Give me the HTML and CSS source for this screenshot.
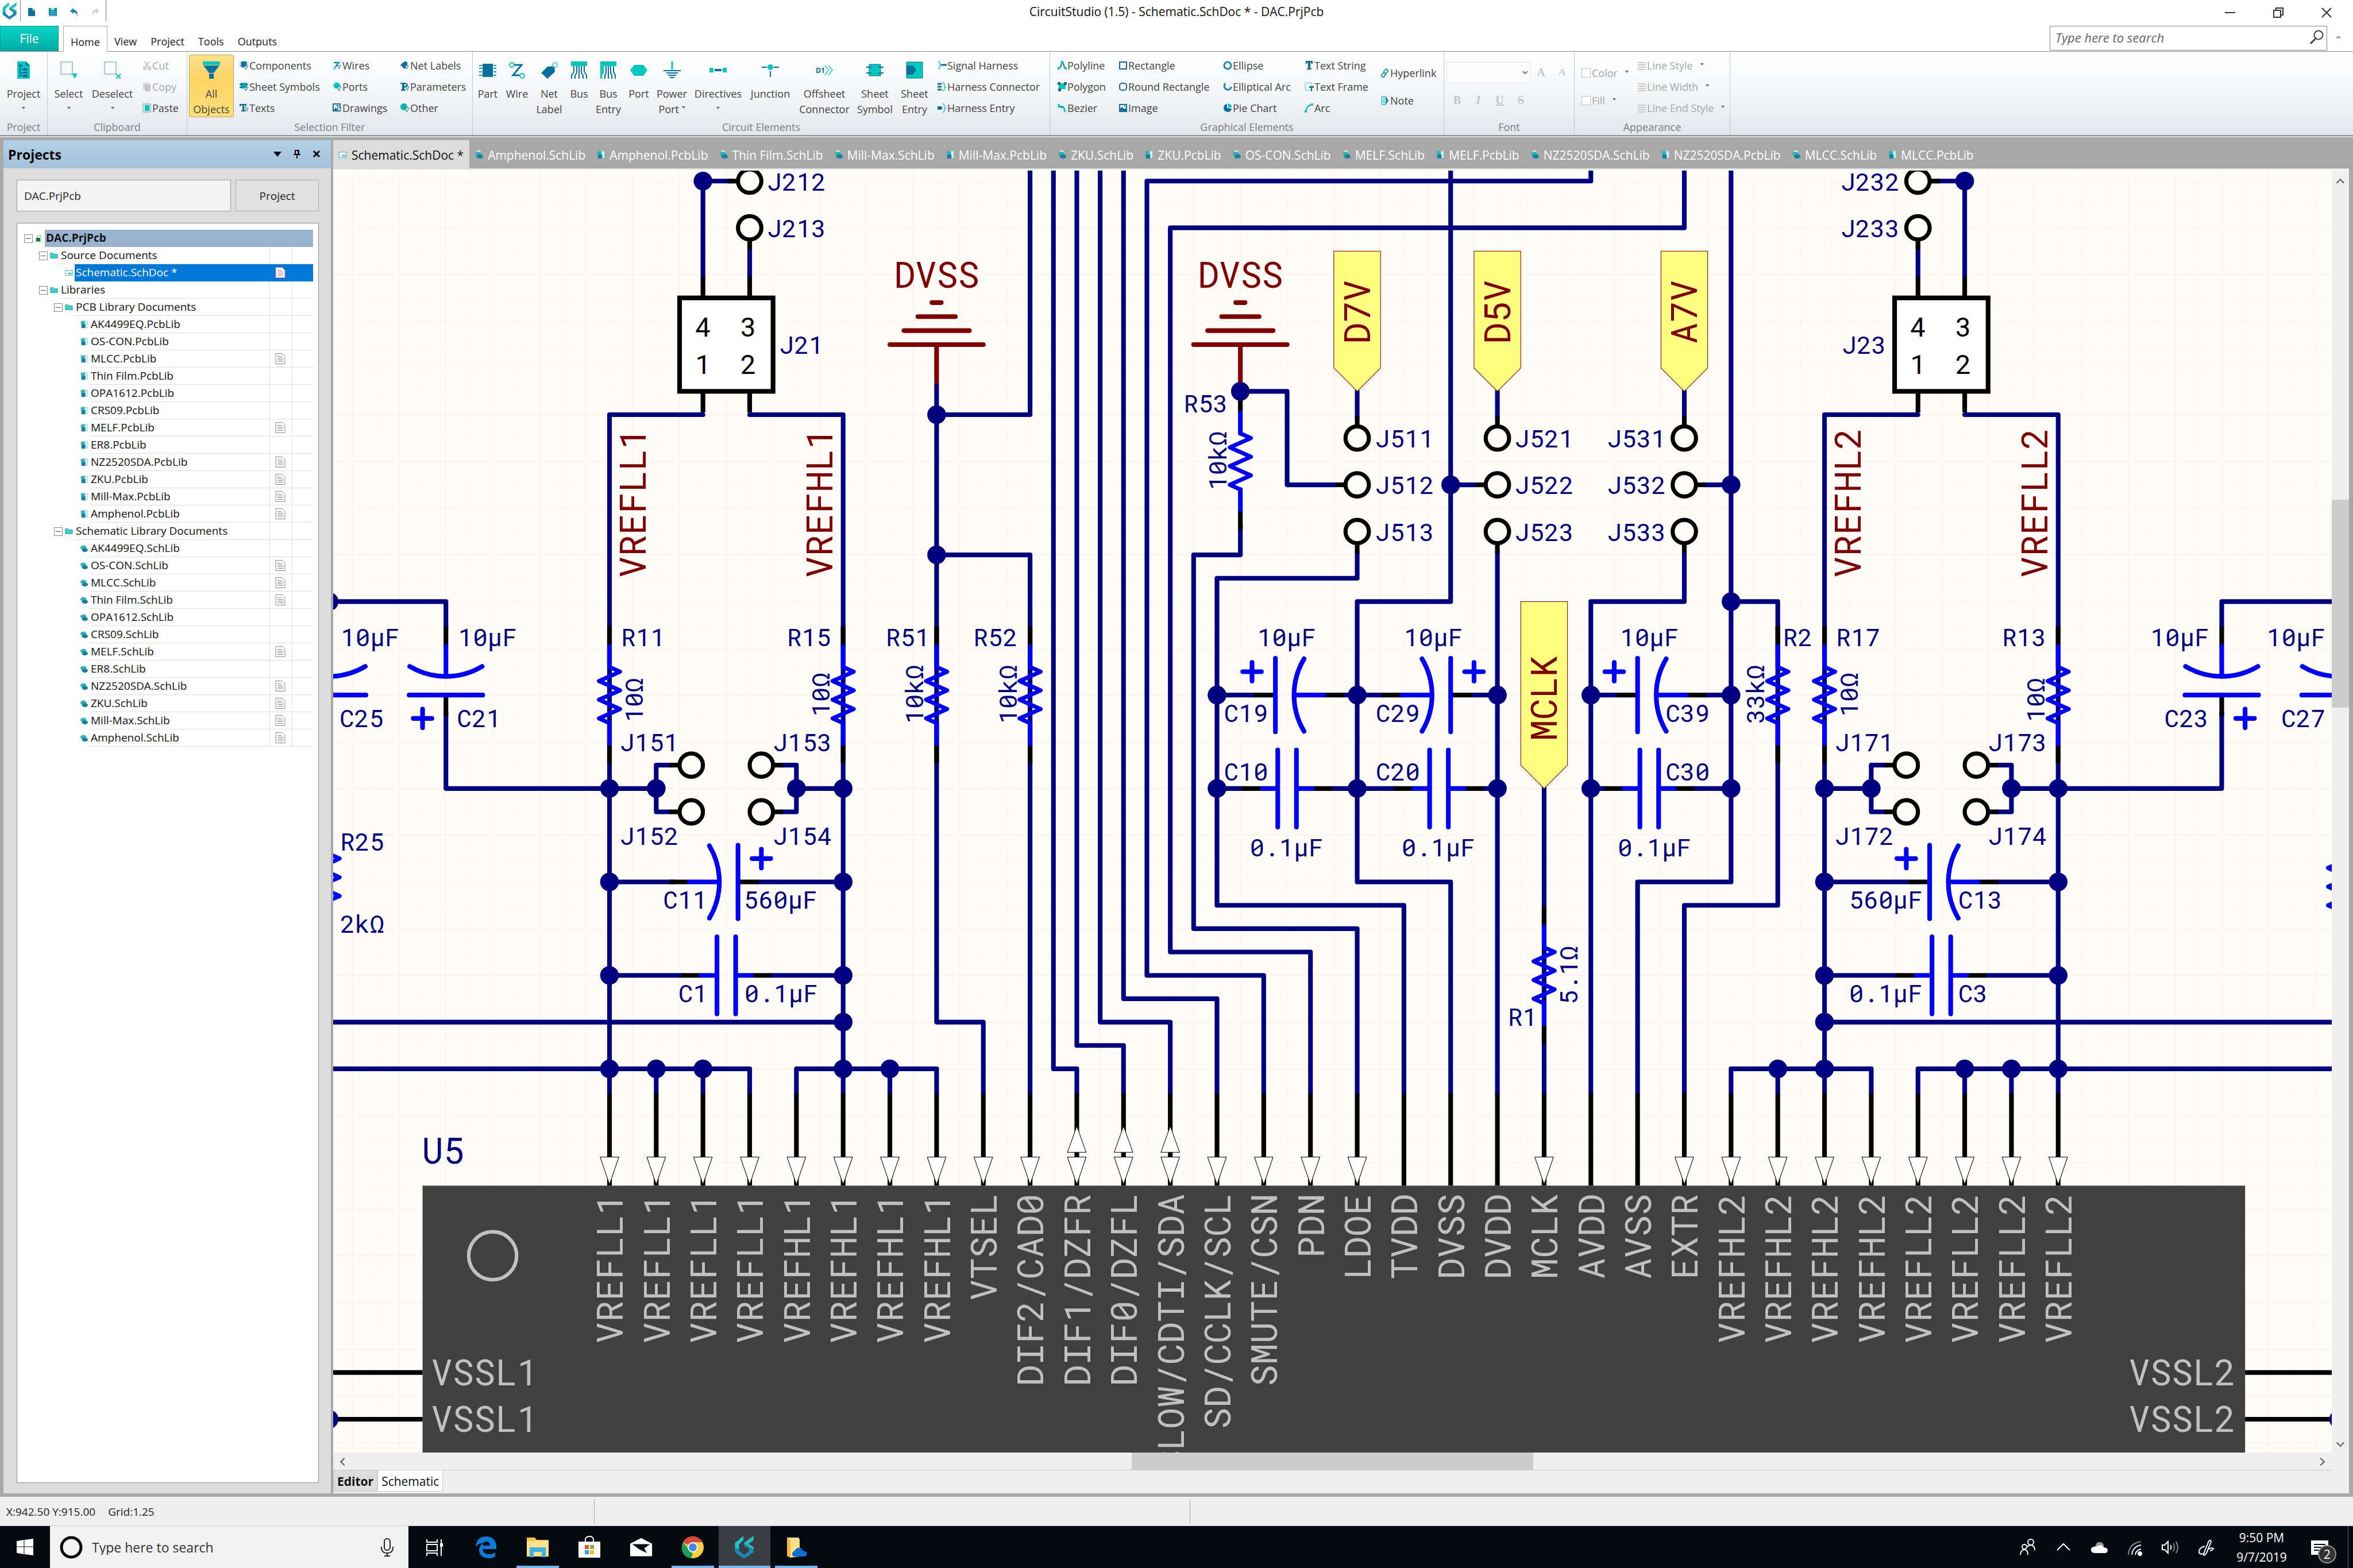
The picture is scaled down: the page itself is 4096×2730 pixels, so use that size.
FILE: index.html
```html
<!DOCTYPE html>
<html lang="en">
<head>
    <meta charset="UTF-8">
    <meta name="viewport" content="width=device-width, initial-scale=1.0">
    <title>CircuitStudio (1.5) - Schematic.SchDoc * - DAC.PrjPcb</title>
    <link rel="stylesheet" href="styles.css">
</head>
<body>
    <!-- icon sprite -->
    <svg class="sprite" aria-hidden="true">
        <symbol id="i-logo" viewBox="0 0 40 46">
            <path fill="#25c0c2" d="M1 14 18 0V9L9 17V26H1ZM38 0V9L28 16 38 22V29L19 18V14Z"/>
            <path fill="#1b87b2" d="M1 26H9V30L19 38 29 31V26L19 20 V15L38 27V33L19 46 1 33Z"/>
        </symbol>
        <symbol id="i-new" viewBox="0 0 16 16"><path fill="#0a6f9f" d="M2 1H9L14 6V15H2Z"/><path fill="#1ec3bd" d="M9 1 14 6H9Z"/></symbol>
        <symbol id="i-save" viewBox="0 0 16 16"><path fill="#0a7fa8" d="M1 1H15V15H3L1 13Z"/><path fill="#7fe3dc" d="M4 1H11V5H4ZM3 7H13V8H3ZM3 10H13V11H3ZM3 13H13V14H3Z"/></symbol>
        <symbol id="i-undo" viewBox="0 0 16 16"><path fill="#0a7fa8" d="M1 6 7 1V4Q14 4 14 15 11 8 7 8V11Z"/></symbol>
        <symbol id="i-redo" viewBox="0 0 16 16"><path fill="#d2d2d2" d="M15 6 9 1V4Q2 4 2 15 5 8 9 8V11Z"/></symbol>
        <symbol id="i-find" viewBox="0 0 26 26"><g fill="none" stroke="#444"><circle cx="16" cy="9" r="7.500" stroke-width="2"/><path stroke-width="3" d="M11 15 2 24"/></g></symbol>

        <symbol id="i-project" viewBox="0 0 30 30"><path fill="#00c8be" d="M4 0H19L26 7V30H4Z"/><path fill="#0a6f9f" d="M19 0 26 7H19Z"/><path fill="none" stroke="#0a6f9f" stroke-width="2" d="M9 7V25H15M9 14H15M9 20H15"/><path fill="#0a6f9f" d="M7 5H13V9H7ZM15 12H22V16H15ZM15 18H22V21H15ZM15 23H22V27H15Z"/></symbol>
        <symbol id="i-select" viewBox="0 0 30 30"><path fill="none" stroke="#0a6f9f" stroke-dasharray="2 1" d="M1 1H21V22H1Z"/><path fill="#00c8be" d="M20 21H30L25 30Z"/></symbol>
        <symbol id="i-deselect" viewBox="0 0 30 30"><path fill="none" stroke="#0a6f9f" stroke-dasharray="2 1" d="M1 1H21V22H1Z"/><path stroke="#00c8be" stroke-width="2" d="M21 22 29 30M29 22 21 30"/></symbol>
        <symbol id="i-filter" viewBox="0 0 30 30"><path fill="#00c8be" d="M0 0H30V6H0Z"/><path fill="#0a6f9f" d="M1 7H29L19 20H11ZM11 21H19V30H11Z"/></symbol>
        <symbol id="i-part" viewBox="0 0 30 30"><path fill="#0a6f9f" d="M6 4H24V27H6Z"/><path stroke="#00a8b0" stroke-width="2" d="M0 7H5M0 12H5M0 18H5M0 24H5M25 7H30M25 12H30M25 18H30M25 24H30"/></symbol>
        <symbol id="i-wire" viewBox="0 0 30 30"><path fill="none" stroke="#0a6f9f" stroke-width="3" d="M10 6H23L8 24H20"/><g fill="none" stroke="#00c8be" stroke-width="2"><circle cx="6" cy="6" r="4"/><circle cx="24" cy="25" r="4"/></g></symbol>
        <symbol id="i-label" viewBox="0 0 30 30"><path fill="#0a6f9f" d="M12 9 24 8 25 18 12 30 1 20Z"/><circle cx="25" cy="6" r="4" fill="none" stroke="#4fd0cd" stroke-width="2"/></symbol>
        <symbol id="i-bus" viewBox="0 0 30 30"><path fill="#00c8be" d="M1 0H29V8H1Z"/><path fill="none" stroke="#0a6f9f" stroke-width="2" d="M6 8V18L2 24V30M11 8V20L8 24V30M15 8V30M19 8V20L22 24V30M24 8V18L28 24V30"/></symbol>
        <symbol id="i-busentry" viewBox="0 0 30 30"><path fill="#00c8be" d="M1 0H29V8H1ZM1 8H7V20L4 24V30H1Z"/><path fill="none" stroke="#0a6f9f" stroke-width="2" d="M11 8V20L9 24V30M15 8V30M19 8V20L21 24V30M24 8V18L27 24V30"/></symbol>
        <symbol id="i-port" viewBox="0 0 30 30"><path fill="#00c8be" d="M7 6H23L30 15 23 25H7L0 15Z"/></symbol>
        <symbol id="i-power" viewBox="0 0 30 30"><path stroke="#00c8be" stroke-width="3" d="M15 0V14"/><path stroke="#0a6f9f" stroke-width="2" d="M0 16H30M5 20H25M8 24H22M11 28H19"/></symbol>
        <symbol id="i-directive" viewBox="0 0 30 30"><path fill="#00c8be" d="M0 11H7V19H0ZM23 11H30V19H23Z"/><path fill="#0a6f9f" d="M9 13H21V17H9Z"/></symbol>
        <symbol id="i-junction" viewBox="0 0 30 30"><path stroke="#0a6f9f" stroke-width="2" d="M0 10H9M21 10H30M15 17V27"/><circle cx="15" cy="10" r="5" fill="#00c8be"/></symbol>
        <symbol id="i-offsheet" viewBox="0 0 30 30"><text x="0" y="20" font-size="12" font-weight="700" fill="#0a6f9f">D1</text><path fill="none" stroke="#4fd0cd" stroke-width="2" d="M16 7 22 15 16 24M22 7 29 15 22 24"/></symbol>
        <symbol id="i-sheetsym" viewBox="0 0 30 30"><path fill="#00c8be" stroke="#0a6f9f" d="M5 5H25V25H5Z"/><path fill="#0a6f9f" d="M0 9H9V11H0ZM0 19H9V21H0ZM21 9H30V11H21ZM21 19H30V21H21Z"/></symbol>
        <symbol id="i-sheetentry" viewBox="0 0 30 30"><path fill="#00c8be" stroke="#0a6f9f" d="M1 1H29V29H1Z"/><path fill="#0a6f9f" d="M1 7H12L18 15 12 23H1Z"/></symbol>

        <symbol id="s-cut" viewBox="0 0 16 16"><g fill="none" stroke="#c4c4c4" stroke-width="2"><path d="M4 1 11 11M12 1 5 11"/><circle cx="4" cy="13" r="2"/><circle cx="12" cy="13" r="2"/></g></symbol>
        <symbol id="s-copy" viewBox="0 0 16 16"><path fill="#dadada" d="M1 1H11V13H1Z"/><path fill="#c4c4c4" d="M4 4H14V16H4Z"/></symbol>
        <symbol id="s-paste" viewBox="0 0 16 16"><path fill="none" stroke="#0a6f9f" stroke-dasharray="2 1" d="M1 1H14V15H1Z"/><path fill="#00c8be" d="M4 3H12V13H4Z"/></symbol>
        <symbol id="s-comp" viewBox="0 0 16 16"><path fill="#0a6f9f" d="M3 1H12V11H3Z"/><path stroke="#00a8b0" d="M0 3H3M0 6H3M0 9H3M12 3H15M12 6H15"/><path fill="#e8f8f8" stroke="#0a6f9f" d="M8 9H15L11 15Z"/></symbol>
        <symbol id="s-sheet" viewBox="0 0 16 16"><path fill="#00a8b0" d="M2 1H13V11H2Z"/><path stroke="#0a6f9f" stroke-width="2" d="M0 4H5M0 9H5M11 4H15"/><path fill="#e8f8f8" stroke="#0a6f9f" d="M8 9H15L11 15Z"/></symbol>
        <symbol id="s-text" viewBox="0 0 16 16"><path fill="#0a6f9f" d="M0 1H12V5H10L9 3H8V12H10V14H3V12H5V3H3L2 5H0Z"/><path fill="#e8f8f8" stroke="#0a6f9f" d="M9 8H15L12 14Z"/></symbol>
        <symbol id="s-wire" viewBox="0 0 16 16"><path fill="none" stroke="#0a6f9f" stroke-width="2" d="M2 3H10L4 12"/><circle cx="11" cy="3" r="2" fill="none" stroke="#00c8be"/><circle cx="3" cy="13" r="2" fill="none" stroke="#00c8be"/><path fill="#e8f8f8" stroke="#0a6f9f" d="M8 8H14L11 14Z"/></symbol>
        <symbol id="s-port" viewBox="0 0 16 16"><path fill="#00c8be" d="M4 1H10L14 6 10 11H4L1 6Z"/><path fill="#e8f8f8" stroke="#0a6f9f" d="M8 8H15L11 15Z"/></symbol>
        <symbol id="s-draw" viewBox="0 0 16 16"><path fill="#fff" stroke="#0a6f9f" stroke-width="2" d="M1 1H13V13H1Z"/><path fill="#0a6f9f" d="M2 12 5 7 8 10V12ZM7 3H10V6H7Z"/><path fill="#e8f8f8" stroke="#0a6f9f" d="M8 8H15L11 15Z"/></symbol>
        <symbol id="s-label" viewBox="0 0 16 16"><path fill="#0a6f9f" d="M0 7 7 1 12 2V9L7 14Z"/><path fill="#e8f8f8" stroke="#0a6f9f" d="M8 8H14L11 14Z"/></symbol>
        <symbol id="s-param" viewBox="0 0 16 16"><path fill="#0a6f9f" fill-rule="evenodd" d="M0 1H8Q13 2 13 5 12 9 7 9V13H9V15H1V13H3V3H0ZM7 3V7Q10 7 10 5 10 3 7 3Z"/><path fill="#e8f8f8" stroke="#0a6f9f" d="M9 8H15L12 14Z"/></symbol>
        <symbol id="s-other" viewBox="0 0 16 16"><circle cx="6" cy="6" r="6" fill="#00b8b0"/><path fill="#e8f8f8" stroke="#0a6f9f" d="M8 8H15L11 15Z"/></symbol>
        <symbol id="s-harness" viewBox="0 0 16 16"><path fill="none" stroke="#4fd0cd" stroke-width="2" d="M1 1Q4 1 4 5T6 7Q4 8 4 11T1 14"/><path stroke="#0a6f9f" stroke-width="3" d="M6 7H16"/></symbol>
        <symbol id="s-harncon" viewBox="0 0 16 16"><path stroke="#0a6f9f" stroke-width="3" d="M0 3H7M0 8H7M0 13H7"/><path fill="none" stroke="#4fd0cd" stroke-width="2" d="M8 1Q12 1 12 5T15 8Q12 9 12 12T8 15"/></symbol>
        <symbol id="s-harnent" viewBox="0 0 16 16"><path fill="#0a6f9f" d="M0 5H6L9 8 6 11H0Z"/><path fill="none" stroke="#4fd0cd" stroke-width="2" d="M8 0Q12 1 12 5T15 8Q12 9 12 12T8 16"/></symbol>
        <symbol id="s-polyline" viewBox="0 0 16 16"><path fill="none" stroke="#0a6f9f" stroke-width="2" d="M2 14Q7 10 7 1M9 2 13 14"/><path fill="#00c8be" d="M0 11H4V15H0ZM12 11H16V15H12ZM6 0H10V4H6Z"/></symbol>
        <symbol id="s-polygon" viewBox="0 0 16 16"><path fill="#00c8be" d="M2 2H14V12H8L2 14Z"/><path fill="#0a6f9f" d="M0 0H5V5H0ZM11 0H16V5H11ZM1 11H6V16H1Z"/></symbol>
        <symbol id="s-bezier" viewBox="0 0 16 16"><path fill="none" stroke="#00c8be" stroke-width="3" d="M2 1V6H8Q12 7 13 15"/><path stroke="#0a6f9f" stroke-width="2" d="M5 6H10"/></symbol>
        <symbol id="s-rect" viewBox="0 0 16 16"><path fill="none" stroke="#0a6f9f" stroke-width="2" d="M2 2H14V14H2Z"/></symbol>
        <symbol id="s-rrect" viewBox="0 0 16 16"><rect x="2" y="2" width="12" height="12" rx="4" fill="none" stroke="#0a6f9f" stroke-width="2"/></symbol>
        <symbol id="s-image" viewBox="0 0 16 16"><path fill="#fff" stroke="#0a6f9f" stroke-width="2" d="M2 2H14V14H2Z"/><path fill="#0a6f9f" d="M2 14V10L6 6 10 10 12 8 14 11V14ZM10 4H12V6H10Z"/></symbol>
        <symbol id="s-ellipse" viewBox="0 0 16 16"><circle cx="8" cy="8" r="6" fill="none" stroke="#1f86a8" stroke-width="3"/></symbol>
        <symbol id="s-earc" viewBox="0 0 16 16"><path fill="none" stroke="#1f86a8" stroke-width="3" d="M4 2Q1 5 3 10 6 14 10 13 14 12 14 8"/></symbol>
        <symbol id="s-pie" viewBox="0 0 16 16"><path fill="#0a6f9f" d="M7 1V8L15 9Q14 15 8 15 1 14 1 8 1 2 7 1Z"/><path fill="#00c8be" d="M9 0Q15 1 15 7H9Z"/></symbol>
        <symbol id="s-t" viewBox="0 0 16 16"><path fill="#0a6f9f" d="M2 0H14V5H12L11 3H10V13H12V15H4V13H6V3H5L4 5H2Z"/></symbol>
        <symbol id="s-frame" viewBox="0 0 16 16"><path fill="none" stroke="#00b8b0" stroke-dasharray="2 1" d="M1 1H12V14H1Z"/><path fill="#0a6f9f" d="M8 7H16V10H13V16H11V10H8Z"/></symbol>
        <symbol id="s-arc" viewBox="0 0 16 16"><path fill="none" stroke="#00a8b0" stroke-width="2" d="M2 14Q3 4 13 2"/><path fill="#00c8be" d="M0 12H4V16H0ZM11 0H15V4H11Z"/></symbol>
        <symbol id="s-link" viewBox="0 0 16 16"><g fill="none" stroke="#1f9aa8" stroke-width="2"><rect x="7" y="1" width="5" height="8" rx="2" transform="rotate(35 9 5)"/><rect x="3" y="7" width="5" height="8" rx="2" transform="rotate(35 5 11)"/></g></symbol>
        <symbol id="s-note" viewBox="0 0 16 16"><path fill="#bff0ee" stroke="#00a8b0" d="M2 1H10V15H2Z"/><path fill="#0a6f9f" d="M9 1 14 8 9 15V11L11 8 9 5Z"/><path stroke="#00a8b0" d="M4 5H8M4 8H8M4 11H8"/></symbol>
        <symbol id="s-lines" viewBox="0 0 16 16"><path stroke="#c8c8c8" stroke-width="2" d="M1 3H15M1 7H15M1 11H15M1 15H15"/></symbol>

        <symbol id="t-sch" viewBox="0 0 16 16"><path fill="#e6fbfa" stroke="#3aa9a5" d="M1 3H15V13H1Z"/><path fill="#3ac0ba" d="M7 8H13V11H7Z"/></symbol>
        <symbol id="t-pcblib" viewBox="0 0 16 16"><path fill="#d9f1f3" stroke="#9cc" d="M6 1H15V14H6Z"/><path fill="#2fb5b5" d="M2 1H10V7H2Z"/><path fill="#157fa6" d="M3 7H11V15H3Z"/></symbol>
        <symbol id="t-schlib" viewBox="0 0 16 16"><path fill="#e4f4f4" d="M4 0H10L13 4H4Z"/><ellipse cx="7" cy="6" rx="6" ry="4" fill="#2fb5ad"/><ellipse cx="10" cy="11" rx="6" ry="4" fill="#157fa6"/></symbol>
        <symbol id="t-prj" viewBox="0 0 16 16"><path fill="#dff0df" stroke="#9bb" d="M4 2H12V15H4Z"/><path fill="#157a30" d="M2 7H10V14H2Z"/></symbol>
        <symbol id="t-folder" viewBox="0 0 16 16"><path fill="#3fcfc6" stroke="#1e9f98" d="M1 3H6L8 5H15V13H1Z"/></symbol>
        <symbol id="t-doc" viewBox="0 0 18 20"><path fill="#fff" stroke="currentColor" d="M1 1H12L17 6V19H1Z"/><path stroke="currentColor" d="M4 6H11M4 9H14M4 12H14M4 15H14"/></symbol>
    </svg>

    <header class="titlebar">
        <div class="quick">
            <svg class="logo"><use href="#i-logo"/></svg>
            <i></i>
            <button aria-label="New"><svg><use href="#i-new"/></svg></button>
            <button aria-label="Save"><svg><use href="#i-save"/></svg></button>
            <button aria-label="Undo"><svg><use href="#i-undo"/></svg></button>
            <button aria-label="Redo"><svg><use href="#i-redo"/></svg></button>
            <i></i>
        </div>
        <h1>CircuitStudio (1.5) - Schematic.SchDoc * - DAC.PrjPcb</h1>
        <div class="winbtns">
            <button aria-label="Minimize"><svg viewBox="0 0 20 20"><path d="M1 10H19"/></svg></button>
            <button aria-label="Restore"><svg viewBox="0 0 20 20"><path d="M2 6H14V18H2ZM6 6V2H18V14H14"/></svg></button>
            <button aria-label="Close"><svg viewBox="0 0 20 20"><path d="M2 2 18 18M18 2 2 18"/></svg></button>
        </div>
    </header>

    <nav class="menu">
        <button class="file">File</button>
        <button class="current">Home</button>
        <button>View</button>
        <button>Project</button>
        <button>Tools</button>
        <button>Outputs</button>
        <label class="search">
            <input type="search" placeholder="Type here to search" aria-label="Search">
            <svg><use href="#i-find"/></svg>
        </label>
        <button class="collapse" aria-label="Collapse ribbon">&#8963;</button>
    </nav>

    <section class="ribbon">
        <div class="group g-project">
            <div class="tools">
                <button class="big"><svg><use href="#i-project"/></svg><span>Project</span><b class="down"></b></button>
            </div>
            <h2>Project</h2>
        </div>
        <div class="group g-clip">
            <div class="tools">
                <button class="big"><svg><use href="#i-select"/></svg><span>Select</span><b class="down"></b></button>
                <button class="big"><svg><use href="#i-deselect"/></svg><span>Deselect</span><b class="down"></b></button>
                <div class="col">
                    <button class="small" disabled><svg><use href="#s-cut"/></svg>Cut</button>
                    <button class="small" disabled><svg><use href="#s-copy"/></svg>Copy</button>
                    <button class="small"><svg><use href="#s-paste"/></svg>Paste</button>
                </div>
            </div>
            <h2>Clipboard</h2>
        </div>
        <div class="group g-filter">
            <div class="tools">
                <button class="big on"><svg><use href="#i-filter"/></svg><span>All<br>Objects</span></button>
                <div class="col">
                    <button class="small"><svg><use href="#s-comp"/></svg>Components</button>
                    <button class="small"><svg><use href="#s-sheet"/></svg>Sheet Symbols</button>
                    <button class="small"><svg><use href="#s-text"/></svg>Texts</button>
                </div>
                <div class="col">
                    <button class="small"><svg><use href="#s-wire"/></svg>Wires</button>
                    <button class="small"><svg><use href="#s-port"/></svg>Ports</button>
                    <button class="small"><svg><use href="#s-draw"/></svg>Drawings</button>
                </div>
                <div class="col">
                    <button class="small"><svg><use href="#s-label"/></svg>Net Labels</button>
                    <button class="small"><svg><use href="#s-param"/></svg>Parameters</button>
                    <button class="small"><svg><use href="#s-other"/></svg>Other</button>
                </div>
            </div>
            <h2>Selection Filter</h2>
        </div>
        <div class="group g-circuit">
            <div class="tools">
                <button class="big"><svg><use href="#i-part"/></svg><span>Part</span></button>
                <button class="big"><svg><use href="#i-wire"/></svg><span>Wire</span></button>
                <button class="big"><svg><use href="#i-label"/></svg><span>Net<br>Label</span></button>
                <button class="big"><svg><use href="#i-bus"/></svg><span>Bus</span></button>
                <button class="big"><svg><use href="#i-busentry"/></svg><span>Bus<br>Entry</span></button>
                <button class="big"><svg><use href="#i-port"/></svg><span>Port</span></button>
                <button class="big"><svg><use href="#i-power"/></svg><span>Power<br>Port <b class="down side"></b></span></button>
                <button class="big"><svg><use href="#i-directive"/></svg><span>Directives</span><b class="down"></b></button>
                <button class="big"><svg><use href="#i-junction"/></svg><span>Junction</span></button>
                <button class="big"><svg><use href="#i-offsheet"/></svg><span>Offsheet<br>Connector</span></button>
                <button class="big"><svg><use href="#i-sheetsym"/></svg><span>Sheet<br>Symbol</span></button>
                <button class="big"><svg><use href="#i-sheetentry"/></svg><span>Sheet<br>Entry</span></button>
                <div class="col">
                    <button class="small"><svg><use href="#s-harness"/></svg>Signal Harness</button>
                    <button class="small"><svg><use href="#s-harncon"/></svg>Harness Connector</button>
                    <button class="small"><svg><use href="#s-harnent"/></svg>Harness Entry</button>
                </div>
            </div>
            <h2>Circuit Elements</h2>
        </div>
        <div class="group g-graph">
            <div class="tools">
                <div class="col">
                    <button class="small"><svg><use href="#s-polyline"/></svg>Polyline</button>
                    <button class="small"><svg><use href="#s-polygon"/></svg>Polygon</button>
                    <button class="small"><svg><use href="#s-bezier"/></svg>Bezier</button>
                </div>
                <div class="col">
                    <button class="small"><svg><use href="#s-rect"/></svg>Rectangle</button>
                    <button class="small"><svg><use href="#s-rrect"/></svg>Round Rectangle</button>
                    <button class="small"><svg><use href="#s-image"/></svg>Image</button>
                </div>
                <div class="col">
                    <button class="small"><svg><use href="#s-ellipse"/></svg>Ellipse</button>
                    <button class="small"><svg><use href="#s-earc"/></svg>Elliptical Arc</button>
                    <button class="small"><svg><use href="#s-pie"/></svg>Pie Chart</button>
                </div>
                <div class="col">
                    <button class="small"><svg><use href="#s-t"/></svg>Text String</button>
                    <button class="small"><svg><use href="#s-frame"/></svg>Text Frame</button>
                    <button class="small"><svg><use href="#s-arc"/></svg>Arc</button>
                </div>
                <div class="col two">
                    <button class="small"><svg><use href="#s-link"/></svg>Hyperlink</button>
                    <button class="small"><svg><use href="#s-note"/></svg>Note</button>
                </div>
            </div>
            <h2>Graphical Elements</h2>
        </div>
        <div class="group g-font">
            <div class="tools">
                <div class="fontrow">
                    <select aria-label="Font" disabled><option></option></select>
                    <button disabled>A</button>
                    <button disabled class="shrink">A</button>
                </div>
                <div class="fontrow">
                    <button disabled>B</button>
                    <button disabled><i>I</i></button>
                    <button disabled><u>U</u></button>
                    <button disabled><s>S</s></button>
                </div>
            </div>
            <h2>Font</h2>
        </div>
        <div class="group g-look">
            <div class="tools">
                <div class="col two">
                    <button class="small" disabled><span class="swatch"></span>Color<b class="down"></b></button>
                    <button class="small" disabled><span class="swatch"></span>Fill<b class="down"></b></button>
                </div>
                <div class="col">
                    <button class="small" disabled><svg><use href="#s-lines"/></svg>Line Style<b class="down"></b></button>
                    <button class="small" disabled><svg><use href="#s-lines"/></svg>Line Width<b class="down"></b></button>
                    <button class="small" disabled><svg><use href="#s-lines"/></svg>Line End Style<b class="down"></b></button>
                </div>
            </div>
            <h2>Appearance</h2>
        </div>
    </section>

    <main class="workspace">
        <aside class="panel">
            <header>
                <h2>Projects</h2>
                <button aria-label="Menu"><svg viewBox="0 0 16 16"><path d="M1 4H15L8 13Z"/></svg></button>
                <button aria-label="Pin"><svg viewBox="0 0 16 16"><path d="M4 1H12V8H14V10H9V16H7V10H2V8H4ZM6 3V8H9V3Z" fill-rule="evenodd"/></svg></button>
                <button aria-label="Close"><svg viewBox="0 0 16 16"><path d="M2 4 4 2 8 6 12 2 14 4 10 8 14 12 12 14 8 10 4 14 2 12 6 8Z"/></svg></button>
            </header>
            <div class="pick">
                <input type="text" value="DAC.PrjPcb" aria-label="Active project">
                <button>Project</button>
            </div>
            <ul class="tree">
                <li class="l0 root"><button class="fold" aria-label="Collapse"></button><svg><use href="#t-prj"/></svg><span>DAC.PrjPcb</span><em></em><em></em></li>
                <li class="l1"><button class="fold" aria-label="Collapse"></button><svg><use href="#t-folder"/></svg><span>Source Documents</span><em></em><em></em></li>
                <li class="l2 leaf picked"><svg><use href="#t-sch"/></svg><span>Schematic.SchDoc *</span><em><svg><use href="#t-doc"/></svg></em><em></em></li>
                <li class="l1"><button class="fold" aria-label="Collapse"></button><svg><use href="#t-folder"/></svg><span>Libraries</span><em></em><em></em></li>
                <li class="l2"><button class="fold" aria-label="Collapse"></button><svg><use href="#t-folder"/></svg><span>PCB Library Documents</span><em></em><em></em></li>
                <li class="l3 leaf"><svg><use href="#t-pcblib"/></svg><span>AK4499EQ.PcbLib</span><em></em><em></em></li>
                <li class="l3 leaf"><svg><use href="#t-pcblib"/></svg><span>OS-CON.PcbLib</span><em></em><em></em></li>
                <li class="l3 leaf"><svg><use href="#t-pcblib"/></svg><span>MLCC.PcbLib</span><em><svg><use href="#t-doc"/></svg></em><em></em></li>
                <li class="l3 leaf"><svg><use href="#t-pcblib"/></svg><span>Thin Film.PcbLib</span><em></em><em></em></li>
                <li class="l3 leaf"><svg><use href="#t-pcblib"/></svg><span>OPA1612.PcbLib</span><em></em><em></em></li>
                <li class="l3 leaf"><svg><use href="#t-pcblib"/></svg><span>CRS09.PcbLib</span><em></em><em></em></li>
                <li class="l3 leaf"><svg><use href="#t-pcblib"/></svg><span>MELF.PcbLib</span><em><svg><use href="#t-doc"/></svg></em><em></em></li>
                <li class="l3 leaf"><svg><use href="#t-pcblib"/></svg><span>ER8.PcbLib</span><em></em><em></em></li>
                <li class="l3 leaf"><svg><use href="#t-pcblib"/></svg><span>NZ2520SDA.PcbLib</span><em><svg><use href="#t-doc"/></svg></em><em></em></li>
                <li class="l3 leaf"><svg><use href="#t-pcblib"/></svg><span>ZKU.PcbLib</span><em><svg><use href="#t-doc"/></svg></em><em></em></li>
                <li class="l3 leaf"><svg><use href="#t-pcblib"/></svg><span>Mill-Max.PcbLib</span><em><svg><use href="#t-doc"/></svg></em><em></em></li>
                <li class="l3 leaf"><svg><use href="#t-pcblib"/></svg><span>Amphenol.PcbLib</span><em><svg><use href="#t-doc"/></svg></em><em></em></li>
                <li class="l2"><button class="fold" aria-label="Collapse"></button><svg><use href="#t-folder"/></svg><span>Schematic Library Documents</span><em></em><em></em></li>
                <li class="l3 leaf"><svg><use href="#t-schlib"/></svg><span>AK4499EQ.SchLib</span><em></em><em></em></li>
                <li class="l3 leaf"><svg><use href="#t-schlib"/></svg><span>OS-CON.SchLib</span><em><svg><use href="#t-doc"/></svg></em><em></em></li>
                <li class="l3 leaf"><svg><use href="#t-schlib"/></svg><span>MLCC.SchLib</span><em><svg><use href="#t-doc"/></svg></em><em></em></li>
                <li class="l3 leaf"><svg><use href="#t-schlib"/></svg><span>Thin Film.SchLib</span><em><svg><use href="#t-doc"/></svg></em><em></em></li>
                <li class="l3 leaf"><svg><use href="#t-schlib"/></svg><span>OPA1612.SchLib</span><em></em><em></em></li>
                <li class="l3 leaf"><svg><use href="#t-schlib"/></svg><span>CRS09.SchLib</span><em></em><em></em></li>
                <li class="l3 leaf"><svg><use href="#t-schlib"/></svg><span>MELF.SchLib</span><em><svg><use href="#t-doc"/></svg></em><em></em></li>
                <li class="l3 leaf"><svg><use href="#t-schlib"/></svg><span>ER8.SchLib</span><em></em><em></em></li>
                <li class="l3 leaf"><svg><use href="#t-schlib"/></svg><span>NZ2520SDA.SchLib</span><em><svg><use href="#t-doc"/></svg></em><em></em></li>
                <li class="l3 leaf"><svg><use href="#t-schlib"/></svg><span>ZKU.SchLib</span><em><svg><use href="#t-doc"/></svg></em><em></em></li>
                <li class="l3 leaf"><svg><use href="#t-schlib"/></svg><span>Mill-Max.SchLib</span><em><svg><use href="#t-doc"/></svg></em><em></em></li>
                <li class="l3 leaf"><svg><use href="#t-schlib"/></svg><span>Amphenol.SchLib</span><em><svg><use href="#t-doc"/></svg></em><em></em></li>
            </ul>
        </aside>

        <section class="editor">
            <div class="doctabs">
                <button class="active"><svg><use href="#t-sch"/></svg>Schematic.SchDoc *</button>
                <button><svg><use href="#t-schlib"/></svg>Amphenol.SchLib</button>
                <button><svg><use href="#t-pcblib"/></svg>Amphenol.PcbLib</button>
                <button><svg><use href="#t-schlib"/></svg>Thin Film.SchLib</button>
                <button><svg><use href="#t-schlib"/></svg>Mill-Max.SchLib</button>
                <button><svg><use href="#t-pcblib"/></svg>Mill-Max.PcbLib</button>
                <button><svg><use href="#t-schlib"/></svg>ZKU.SchLib</button>
                <button><svg><use href="#t-pcblib"/></svg>ZKU.PcbLib</button>
                <button><svg><use href="#t-schlib"/></svg>OS-CON.SchLib</button>
                <button><svg><use href="#t-schlib"/></svg>MELF.SchLib</button>
                <button><svg><use href="#t-pcblib"/></svg>MELF.PcbLib</button>
                <button><svg><use href="#t-schlib"/></svg>NZ2520SDA.SchLib</button>
                <button><svg><use href="#t-pcblib"/></svg>NZ2520SDA.PcbLib</button>
                <button><svg><use href="#t-schlib"/></svg>MLCC.SchLib</button>
                <button><svg><use href="#t-pcblib"/></svg>MLCC.PcbLib</button>
            </div>

            <div class="sheet">
                <!-- grid pitch is 40 units, pins sit every 80 -->
                <svg class="schematic" viewBox="7 22 3422 2195" preserveAspectRatio="xMinYMin slice">
                    <defs>
                        <pattern id="grid" width="80" height="80" patternUnits="userSpaceOnUse">
                            <path class="minor" d="M0 0V80M0 0H80"/>
                            <path class="major" d="M40 0V80M0 40H80"/>
                        </pattern>
                        <g id="res">
                            <path class="lead" d="M0 -118V-83M0 83V117"/>
                            <path class="part" d="M0 -83V-48M0 48V83"/>
                            <path class="part zig" d="M0 -48L18 -40 -18 -24 18 -8 -18 8 18 24 -18 40 0 48"/>
                        </g>
                        <g id="cap">
                            <path class="lead" d="M-77 0H-43M43 0H77"/>
                            <path class="part" d="M-43 0H-16M16 0H43M-16 -66V66M16 -66V66"/>
                        </g>
                        <g id="ecap">
                            <path class="lead" d="M-56 0H-20M63 0H97"/>
                            <path class="part" d="M-20 -63V63M12 0H63M29 -62A121 121 0 0 0 29 62M-76 -40H-44M-60 -56V-24"/>
                        </g>
                        <g id="pad">
                            <path class="lead" d="M0 -20V-37"/>
                            <circle class="ring" r="20"/>
                        </g>
                        <g id="gnd">
                            <path class="power" d="M-80 0H80M-56 -24H56M-32 -48H32M-8 -72H8M0 0V64"/>
                        </g>
                        <g id="hdr">
                            <path class="lead" d="M-40 -116V-80M40 -116V-80M-40 80V116M40 80V116"/>
                            <rect class="box" x="-80" y="-80" width="160" height="160"/>
                            <text class="num" x="-40" y="-14">4</text>
                            <text class="num" x="38" y="-14">3</text>
                            <text class="num" x="-40" y="50">1</text>
                            <text class="num" x="38" y="50">2</text>
                        </g>
                        <path id="pin" class="lead" d="M0 -158V0"/>
                        <g id="pin-in">
                            <use href="#pin"/>
                            <path class="arrow" d="M-16 -49H16L0 -2Z"/>
                        </g>
                        <g id="pin-io">
                            <use href="#pin-in"/>
                            <path class="arrow" d="M-16 -57H16L0 -102Z"/>
                        </g>
                        <path id="port" class="port" d="M-40 -240H40V-40L0 0 -40 -40Z"/>
                    </defs>

                    <rect x="0" y="0" width="3600" height="2400" fill="url(#grid)"/>

                    <!-- wires -->
                    <g class="wire">
                        <path d="M640 204V40H690M720 150V204"/>
                        <path d="M640 440H480V1602M720 440H880V1602"/>
                        <path d="M0 760H200V804M200 950V1080H560M584 1040H560V1120H584M776 1040H800V1120H776M800 1080H880"/>
                        <path d="M480 1240H590M735 1240H880M480 1400H604M756 1400H880"/>
                        <path d="M0 1480H880M0 1560H720V1602M560 1560V1602M640 1560V1602M800 1602V1560H1040V1602M960 1560V1602"/>
                        <path d="M1040 388V1480H1120V1602M1040 440H1200V0M1040 680H1200V1602"/>
                        <path d="M1240 0V1560H1280V1602"/>
                        <path d="M1280 0V1520H1360V1602"/>
                        <path d="M1320 0V1480H1440V1602"/>
                        <path d="M1360 0V1440H1520V1602"/>
                        <path d="M2160 0V40H1400V1400H1600V1602"/>
                        <path d="M2320 0V120H1440V1360H1680V1602"/>
                        <path d="M1560 630V680H1480V1320H1760V1602"/>
                        <path d="M1760 675V720H1520V1280H1840V1602"/>
                        <path d="M1920 0V760H1760V1240H1920V1602M1920 560H1965"/>
                        <path d="M1560 400H1640V560H1724M1760 400V444M2000 400V444M2320 400V444"/>
                        <path d="M2000 675V1602M2080 1080V1602M2320 675V760H2160V1602"/>
                        <path d="M2400 0V1240H2240V1602M2356 560H2400M2400 760H2480V1280H2320V1602"/>
                        <path d="M1520 920H1584M1736 920H1804M1956 920H2000M2160 920H2204M2356 920H2400"/>
                        <path d="M1520 1080H1564M1716 1080H1824M1976 1080H2000M2160 1080H2184M2336 1080H2400"/>
                        <path d="M2720 150V204M2750 40H2800V204M2720 440H2560V1602M2800 440H2960V1602"/>
                        <path d="M2664 1040H2640V1120H2664M2560 1080H2640M2856 1040H2880V1120H2856M2880 1080H3240V950M3240 804V760H3440"/>
                        <path d="M2560 1240H2704M2856 1240H2960M2560 1400H2684M2836 1400H2960M2560 1480H3440"/>
                        <path d="M2400 1602V1560H2640V1602M2480 1560V1602M2720 1602V1560H3440M2800 1560V1602M2880 1560V1602"/>
                    </g>

                    <!-- parts -->
                    <use href="#hdr" x="680" y="320"/>
                    <use href="#hdr" x="2760" y="320"/>
                    <use href="#gnd" x="1040" y="320"/>
                    <use href="#gnd" x="1560" y="320"/>
                    <use href="#res" x="0" y="1240"/>
                    <use href="#res" x="480" y="920"/>
                    <use href="#res" x="880" y="920"/>
                    <use href="#res" x="1040" y="920"/>
                    <use href="#res" x="1200" y="920"/>
                    <use href="#res" x="1560" y="520"/>
                    <use href="#res" x="2080" y="1400"/>
                    <use href="#res" x="2480" y="920"/>
                    <use href="#res" x="2560" y="920"/>
                    <use href="#res" x="2960" y="920"/>
                    <use href="#res" x="3440" y="1240"/>
                    <use href="#cap" x="680" y="1400"/>
                    <use href="#cap" x="1640" y="1080"/>
                    <use href="#cap" x="1900" y="1080"/>
                    <use href="#cap" x="2260" y="1080"/>
                    <use href="#cap" x="2760" y="1400"/>
                    <use href="#ecap" x="1640" y="920"/>
                    <use href="#ecap" transform="translate(1900 920) scale(-1 1)"/>
                    <use href="#ecap" x="2260" y="920"/>
                    <use href="#ecap" transform="translate(680 1240) scale(-1 1)"/>
                    <use href="#ecap" x="2760" y="1240"/>
                    <use href="#ecap" transform="translate(0 900) rotate(-90)"/>
                    <use href="#ecap" transform="translate(200 900) rotate(-90)"/>
                    <use href="#ecap" transform="translate(3240 900) scale(-1 1) rotate(-90)"/>
                    <use href="#ecap" transform="translate(3440 900) scale(-1 1) rotate(-90)"/>
                    <use href="#pad" transform="translate(720 40) rotate(-90)"/>
                    <use href="#pad" transform="translate(720 120) rotate(180)"/>
                    <use href="#pad" transform="translate(2720 40) rotate(90)"/>
                    <use href="#pad" transform="translate(2720 120) rotate(180)"/>
                    <use href="#pad" transform="translate(620 1040) rotate(-90)"/>
                    <use href="#pad" transform="translate(620 1120) rotate(-90)"/>
                    <use href="#pad" transform="translate(740 1040) rotate(90)"/>
                    <use href="#pad" transform="translate(740 1120) rotate(90)"/>
                    <use href="#pad" transform="translate(2700 1040) rotate(-90)"/>
                    <use href="#pad" transform="translate(2700 1120) rotate(-90)"/>
                    <use href="#pad" transform="translate(2820 1040) rotate(90)"/>
                    <use href="#pad" transform="translate(2820 1120) rotate(90)"/>
                    <use href="#pad" x="1760" y="480"/>
                    <use href="#pad" x="2000" y="480"/>
                    <use href="#pad" x="2320" y="480"/>
                    <use href="#pad" transform="translate(1760 560) rotate(-90)"/>
                    <use href="#pad" transform="translate(2000 560) rotate(-90)"/>
                    <use href="#pad" transform="translate(2320 560) rotate(90)"/>
                    <use href="#pad" transform="translate(1760 640) rotate(180)"/>
                    <use href="#pad" transform="translate(2000 640) rotate(180)"/>
                    <use href="#pad" transform="translate(2320 640) rotate(180)"/>
                    <use href="#port" x="1760" y="400"/>
                    <use href="#port" x="2000" y="400"/>
                    <use href="#port" x="2320" y="400"/>
                    <path class="port" d="M2040 760H2120V1040L2080 1080 2040 1040Z"/>

                    <!-- junctions -->
                    <g class="dot">
                        <circle cx="640" cy="40" r="16"/><circle cx="2800" cy="40" r="16"/>
                        <circle cx="1560" cy="400" r="16"/><circle cx="1040" cy="440" r="16"/><circle cx="1040" cy="680" r="16"/>
                        <circle cx="1920" cy="560" r="16"/><circle cx="2400" cy="560" r="16"/>
                        <circle cx="0" cy="760" r="16"/><circle cx="2400" cy="760" r="16"/>
                        <circle cx="1520" cy="920" r="16"/><circle cx="1760" cy="920" r="16"/><circle cx="2000" cy="920" r="16"/>
                        <circle cx="2160" cy="920" r="16"/><circle cx="2400" cy="920" r="16"/>
                        <circle cx="480" cy="1080" r="16"/><circle cx="560" cy="1080" r="16"/><circle cx="800" cy="1080" r="16"/><circle cx="880" cy="1080" r="16"/>
                        <circle cx="1520" cy="1080" r="16"/><circle cx="1760" cy="1080" r="16"/><circle cx="2000" cy="1080" r="16"/>
                        <circle cx="2160" cy="1080" r="16"/><circle cx="2400" cy="1080" r="16"/>
                        <circle cx="2560" cy="1080" r="16"/><circle cx="2640" cy="1080" r="16"/><circle cx="2880" cy="1080" r="16"/><circle cx="2960" cy="1080" r="16"/>
                        <circle cx="480" cy="1240" r="16"/><circle cx="880" cy="1240" r="16"/><circle cx="2560" cy="1240" r="16"/><circle cx="2960" cy="1240" r="16"/>
                        <circle cx="480" cy="1400" r="16"/><circle cx="880" cy="1400" r="16"/><circle cx="2560" cy="1400" r="16"/><circle cx="2960" cy="1400" r="16"/>
                        <circle cx="880" cy="1480" r="16"/><circle cx="2560" cy="1480" r="16"/>
                        <circle cx="480" cy="1560" r="16"/><circle cx="560" cy="1560" r="16"/><circle cx="640" cy="1560" r="16"/>
                        <circle cx="880" cy="1560" r="16"/><circle cx="960" cy="1560" r="16"/>
                        <circle cx="2480" cy="1560" r="16"/><circle cx="2560" cy="1560" r="16"/>
                        <circle cx="2800" cy="1560" r="16"/><circle cx="2880" cy="1560" r="16"/><circle cx="2960" cy="1560" r="16"/>
                    </g>

                    <!-- U5 -->
                    <rect class="chip" x="160" y="1760" width="3120" height="520"/>
                    <circle class="mark" cx="280" cy="1880" r="41"/>
                    <path class="lead" d="M0 2080H160M0 2160H160M3280 2080H3450M3280 2160H3450"/>
                    <g class="dot"><circle cx="0" cy="2160" r="16"/><circle cx="3440" cy="2160" r="16"/></g>
                    <use href="#pin-in" x="480" y="1760"/>
                    <use href="#pin-in" x="560" y="1760"/>
                    <use href="#pin-in" x="640" y="1760"/>
                    <use href="#pin-in" x="720" y="1760"/>
                    <use href="#pin-in" x="800" y="1760"/>
                    <use href="#pin-in" x="880" y="1760"/>
                    <use href="#pin-in" x="960" y="1760"/>
                    <use href="#pin-in" x="1040" y="1760"/>
                    <use href="#pin-in" x="1120" y="1760"/>
                    <use href="#pin-in" x="1200" y="1760"/>
                    <use href="#pin-io" x="1280" y="1760"/>
                    <use href="#pin-io" x="1360" y="1760"/>
                    <use href="#pin-io" x="1440" y="1760"/>
                    <use href="#pin-in" x="1520" y="1760"/>
                    <use href="#pin-in" x="1600" y="1760"/>
                    <use href="#pin-in" x="1680" y="1760"/>
                    <use href="#pin-in" x="1760" y="1760"/>
                    <use href="#pin" x="1840" y="1760"/>
                    <use href="#pin" x="1920" y="1760"/>
                    <use href="#pin" x="2000" y="1760"/>
                    <use href="#pin-in" x="2080" y="1760"/>
                    <use href="#pin" x="2160" y="1760"/>
                    <use href="#pin" x="2240" y="1760"/>
                    <use href="#pin-in" x="2320" y="1760"/>
                    <use href="#pin-in" x="2400" y="1760"/>
                    <use href="#pin-in" x="2480" y="1760"/>
                    <use href="#pin-in" x="2560" y="1760"/>
                    <use href="#pin-in" x="2640" y="1760"/>
                    <use href="#pin-in" x="2720" y="1760"/>
                    <use href="#pin-in" x="2800" y="1760"/>
                    <use href="#pin-in" x="2880" y="1760"/>
                    <use href="#pin-in" x="2960" y="1760"/>
                    <g class="pinname">
                        <text transform="translate(503 1774) rotate(-90)">VREFLL1</text>
                        <text transform="translate(583 1774) rotate(-90)">VREFLL1</text>
                        <text transform="translate(663 1774) rotate(-90)">VREFLL1</text>
                        <text transform="translate(743 1774) rotate(-90)">VREFLL1</text>
                        <text transform="translate(823 1774) rotate(-90)">VREFHL1</text>
                        <text transform="translate(903 1774) rotate(-90)">VREFHL1</text>
                        <text transform="translate(983 1774) rotate(-90)">VREFHL1</text>
                        <text transform="translate(1063 1774) rotate(-90)">VREFHL1</text>
                        <text transform="translate(1143 1774) rotate(-90)">VTSEL</text>
                        <text transform="translate(1223 1774) rotate(-90)">DIF2/CAD0</text>
                        <text transform="translate(1303 1774) rotate(-90)">DIF1/DZFR</text>
                        <text transform="translate(1383 1774) rotate(-90)">DIF0/DZFL</text>
                        <text transform="translate(1463 1774) rotate(-90)">SLOW/CDTI/SDA</text>
                        <text transform="translate(1543 1774) rotate(-90)">SD/CCLK/SCL</text>
                        <text transform="translate(1623 1774) rotate(-90)">SMUTE/CSN</text>
                        <text transform="translate(1703 1774) rotate(-90)">PDN</text>
                        <text transform="translate(1783 1774) rotate(-90)">LDOE</text>
                        <text transform="translate(1863 1774) rotate(-90)">TVDD</text>
                        <text transform="translate(1943 1774) rotate(-90)">DVSS</text>
                        <text transform="translate(2023 1774) rotate(-90)">DVDD</text>
                        <text transform="translate(2103 1774) rotate(-90)">MCLK</text>
                        <text transform="translate(2183 1774) rotate(-90)">AVDD</text>
                        <text transform="translate(2263 1774) rotate(-90)">AVSS</text>
                        <text transform="translate(2343 1774) rotate(-90)">EXTR</text>
                        <text transform="translate(2423 1774) rotate(-90)">VREFHL2</text>
                        <text transform="translate(2503 1774) rotate(-90)">VREFHL2</text>
                        <text transform="translate(2583 1774) rotate(-90)">VREFHL2</text>
                        <text transform="translate(2663 1774) rotate(-90)">VREFHL2</text>
                        <text transform="translate(2743 1774) rotate(-90)">VREFLL2</text>
                        <text transform="translate(2823 1774) rotate(-90)">VREFLL2</text>
                        <text transform="translate(2903 1774) rotate(-90)">VREFLL2</text>
                        <text transform="translate(2983 1774) rotate(-90)">VREFLL2</text>
                        <text class="start" x="175" y="2102">VSSL1</text>
                        <text class="start" x="175" y="2182">VSSL1</text>
                        <text x="3264" y="2102">VSSL2</text>
                        <text x="3264" y="2182">VSSL2</text>
                    </g>

                    <!-- net names and ports -->
                    <g class="net">
                        <text x="967" y="223">DVSS</text>
                        <text x="1487" y="223">DVSS</text>
                        <text transform="translate(542 719) rotate(-90)">VREFLL1</text>
                        <text transform="translate(862 719) rotate(-90)">VREFHL1</text>
                        <text transform="translate(2622 719) rotate(-90)">VREFHL2</text>
                        <text transform="translate(2942 719) rotate(-90)">VREFLL2</text>
                        <text transform="translate(1782 319) rotate(-90)">D7V</text>
                        <text transform="translate(2022 319) rotate(-90)">D5V</text>
                        <text transform="translate(2342 319) rotate(-90)">A7V</text>
                        <text transform="translate(2102 999) rotate(-90)">MCLK</text>
                    </g>

                    <!-- designators and values -->
                    <g class="ref">
                        <text class="chipref" x="159" y="1722">U5</text>
                        <text x="750" y="56">J212</text>
                        <text x="750" y="136">J213</text>
                        <text x="771" y="336">J21</text>
                        <text x="500" y="836">R11</text>
                        <text x="784" y="836">R15</text>
                        <text x="953" y="836">R51</text>
                        <text x="1103" y="836">R52</text>
                        <text transform="translate(537 966) rotate(-90)">10Ω</text>
                        <text transform="translate(857 957) rotate(-90)">10Ω</text>
                        <text transform="translate(1017 969) rotate(-90)">10kΩ</text>
                        <text transform="translate(1177 969) rotate(-90)">10kΩ</text>
                        <text x="498" y="1016">J151</text>
                        <text x="760" y="1016">J153</text>
                        <text x="498" y="1177">J152</text>
                        <text x="760" y="1177">J154</text>
                        <text x="572" y="1286">C11</text>
                        <text x="710" y="1286">560µF</text>
                        <text x="598" y="1446">C1</text>
                        <text x="711" y="1446">0.1µF</text>
                        <text x="19" y="1186">R25</text>
                        <text x="19" y="1327">2kΩ</text>
                        <text x="20" y="836">10µF</text>
                        <text x="221" y="836">10µF</text>
                        <text x="18" y="975">C25</text>
                        <text x="219" y="975">C21</text>
                        <text x="1463" y="436">R53</text>
                        <text transform="translate(1536 569) rotate(-90)">10kΩ</text>
                        <text x="1791" y="496">J511</text>
                        <text x="1791" y="576">J512</text>
                        <text x="1791" y="656">J513</text>
                        <text x="2030" y="496">J521</text>
                        <text x="2030" y="576">J522</text>
                        <text x="2030" y="656">J523</text>
                        <text x="2188" y="496">J531</text>
                        <text x="2188" y="576">J532</text>
                        <text x="2188" y="656">J533</text>
                        <text x="1589" y="836">10µF</text>
                        <text x="1840" y="836">10µF</text>
                        <text x="2210" y="836">10µF</text>
                        <text x="1532" y="966">C19</text>
                        <text x="1792" y="966">C29</text>
                        <text x="2288" y="966">C39</text>
                        <text x="1532" y="1066">C10</text>
                        <text x="1792" y="1066">C20</text>
                        <text x="2288" y="1066">C30</text>
                        <text x="1576" y="1196">0.1µF</text>
                        <text x="1836" y="1196">0.1µF</text>
                        <text x="2206" y="1196">0.1µF</text>
                        <text x="2018" y="1486">R1</text>
                        <text transform="translate(2137 1450) rotate(-90)">5.1Ω</text>
                        <text x="2588" y="56">J232</text>
                        <text x="2588" y="136">J233</text>
                        <text x="2590" y="336">J23</text>
                        <text x="2489" y="836">R2</text>
                        <text x="2580" y="836">R17</text>
                        <text x="2864" y="836">R13</text>
                        <text transform="translate(2457 969) rotate(-90)">33kΩ</text>
                        <text transform="translate(2617 957) rotate(-90)">10Ω</text>
                        <text transform="translate(2937 966) rotate(-90)">10Ω</text>
                        <text x="2578" y="1016">J171</text>
                        <text x="2578" y="1177">J172</text>
                        <text x="2840" y="1016">J173</text>
                        <text x="2840" y="1177">J174</text>
                        <text x="2602" y="1286">560µF</text>
                        <text x="2789" y="1286">C13</text>
                        <text x="2602" y="1446">0.1µF</text>
                        <text x="2789" y="1446">C3</text>
                        <text x="3118" y="836">10µF</text>
                        <text x="3317" y="836">10µF</text>
                        <text x="3142" y="975">C23</text>
                        <text x="3342" y="975">C27</text>
                    </g>
                </svg>
                <div class="vscroll"><b></b></div>
                <div class="hscroll"><b></b></div>
            </div>

            <div class="modes">
                <button class="active">Editor</button>
                <button>Schematic</button>
            </div>
        </section>
    </main>

    <footer class="status">
        <p><span>X:942.50 Y:915.00</span><span>Grid:1.25</span></p>
        <p></p>
        <p></p>
    </footer>

    <nav class="taskbar">
        <button class="start" aria-label="Start"><svg viewBox="0 0 28 28"><path fill="#fff" d="M0 4 12 2V13H0ZM13 2 28 0V13H13ZM0 14H12V26L0 24ZM13 14H28V28L13 26Z"/></svg></button>
        <label class="cortana">
            <svg viewBox="0 0 40 40"><circle cx="20" cy="20" r="17" fill="none" stroke="#000" stroke-width="5"/></svg>
            <input type="text" placeholder="Type here to search" aria-label="Type here to search">
            <svg viewBox="0 0 40 40" fill="none" stroke="#222" stroke-width="2"><rect x="15" y="5" width="10" height="20" rx="5"/><path d="M10 19V22Q11 30 20 30T30 22V19M20 30V35M15 35H25"/></svg>
        </label>
        <button aria-label="Task View"><svg viewBox="0 0 40 40" fill="none" stroke="#fff" stroke-width="2"><path d="M7 6V11H25V6M7 15H25V26H7ZM7 35V30H25V35M32 6V35"/><path fill="#fff" d="M31 14H34V18H31Z"/></svg></button>
        <button aria-label="Edge"><svg viewBox="0 0 40 40"><path fill="#0a7bdc" fill-rule="evenodd" d="M2 19Q4 1 21 1 37 2 38 18V23H14Q15 32 26 32 32 32 36 29V36Q30 40 23 39 8 37 8 24 9 16 16 12 7 13 2 19ZM14 17H27Q27 10 21 10 15 10 14 17Z"/></svg></button>
        <button class="open" aria-label="File Explorer"><svg viewBox="0 0 40 40"><path fill="#f5c84b" d="M1 3H15L18 7H39V12H1Z"/><path fill="#fbe28d" d="M1 9H39V36H1Z"/><path fill="#41b1e0" d="M6 20H34V37H27V28H13V37H6Z"/></svg></button>
        <button aria-label="Store"><svg viewBox="0 0 40 40"><path fill="none" stroke="#fff" stroke-width="2" d="M13 11V6Q14 1 20 1T27 6V11"/><path fill="#fff" d="M1 10H39V38H1Z"/><path fill="#e8502a" d="M12 16H19V23H12Z"/><path fill="#7fb93c" d="M21 16H28V23H21Z"/><path fill="#2aa3df" d="M12 25H19V32H12Z"/><path fill="#f7b82c" d="M21 25H28V32H21Z"/></svg></button>
        <button aria-label="Mail"><svg viewBox="0 0 44 40"><path fill="#fff" d="M1 13 22 2 43 13V37H1Z"/><path fill="#060b12" d="M5 14H39L28 22 33 31 19 24Z"/></svg></button>
        <button class="open" aria-label="Chrome"><svg viewBox="0 0 40 40"><circle cx="20" cy="20" r="19" fill="#f9cf3f"/><path fill="#db4437" d="M20 20 3 11Q9 1 20 1T37 11H20Z"/><path fill="#1a9e57" d="M3 11 20 31 17 39Q1 37 1 20 1 15 3 11Z"/><circle cx="20" cy="20" r="9" fill="#fff"/><circle cx="20" cy="20" r="7" fill="#4a86e8"/></svg></button>
        <button class="open now" aria-label="CircuitStudio"><svg><use href="#i-logo"/></svg></button>
        <button class="open" aria-label="OneDrive folder"><svg viewBox="0 0 40 40"><path fill="#fbe08a" d="M4 3H24L26 6V36L10 38 4 34Z"/><path fill="#f0b93a" d="M4 3 10 8V38L4 35Z"/><path fill="#0d6fd0" d="M15 36Q10 30 17 26 22 18 29 22 32 27 38 28 40 34 35 36Z"/></svg></button>
        <div class="tray">
            <svg viewBox="0 0 30 30"><circle cx="20" cy="6" r="5"/><circle cx="9" cy="14" r="4"/><path d="M2 28Q3 19 9 19T15 28M14 14Q17 11 20 11 27 12 27 20"/></svg>
            <svg viewBox="0 0 30 30"><path d="M4 20 15 9 26 20"/></svg>
            <svg viewBox="0 0 30 30"><path fill="#999" stroke="none" d="M8 14Q10 4 18 6 24 8 23 14Z"/><path fill="#fff" stroke="none" d="M7 25Q0 24 1 18 3 13 9 14L17 11Q22 12 23 15 30 15 30 21 29 25 25 25Z"/></svg>
            <svg viewBox="0 0 30 30"><path stroke="#888" d="M4 28Q5 8 26 5"/><path d="M10 28Q11 14 26 11M16 28Q17 20 26 18"/><circle cx="24" cy="26" r="3" fill="#fff"/></svg>
            <svg viewBox="0 0 30 30"><path d="M1 11H5L11 5V25L5 19H1ZM15 11Q18 15 15 19"/><path stroke="#888" d="M20 8Q24 15 20 22M25 5Q31 15 25 25"/></svg>
            <svg viewBox="0 0 30 30"><path d="M12 24 20 4Q23 1 24 5L16 25Q13 30 11 28ZM13 13Q2 16 3 24 5 28 11 26M19 18Q25 15 28 17 27 20 22 21"/></svg>
            <time>9:50 PM<br>9/7/2019</time>
            <button class="notes" aria-label="Notifications"><svg viewBox="0 0 30 30"><path fill="#fff" stroke="none" d="M0 1H30V26H18L14 30V26H0Z"/><path stroke="#060b12" d="M5 8H25M5 13H25M5 18H20"/></svg><span>2</span></button>
        </div>
    </nav>
</body>
</html>
```
FILE: styles.css
```css
* {
    box-sizing: border-box;
}
body {
    margin: 0;
    height: 100vh;
    display: flex;
    flex-direction: column;
    overflow: hidden;
    background: #fff;
    color: #222;
    font: 18px/26px "Open Sans", "Noto Sans", sans-serif;
}
button, input, select {
    font: inherit;
    color: inherit;
    border: 0;
    padding: 0;
    margin: 0;
    background: none;
}
h1, h2, p, ul {
    margin: 0;
    padding: 0;
    font-weight: 400;
    list-style: none;
}
.sprite {
    display: none;
}

/* title bar */
.titlebar {
    display: grid;
    grid-template-columns: 1fr auto 1fr;
    height: 45px;
    flex: none;
}
.titlebar h1 {
    font-size: 21px;
    line-height: 40px;
    color: #111;
}
.quick {
    display: flex;
    align-items: center;
    height: 37px;
}
.quick .logo {
    width: 26px;
    height: 30px;
    margin: 0 5px 0 4px;
}
.quick i {
    width: 1px;
    height: 100%;
    background: #777;
}
.quick button {
    width: 37px;
    height: 37px;
    padding-top: 6px;
}
.quick button svg {
    width: 16px;
    height: 16px;
}
.winbtns {
    display: flex;
    justify-content: flex-end;
    padding-right: 4px;
}
.winbtns button {
    width: 84px;
    height: 49px;
}
.winbtns svg {
    width: 20px;
    height: 20px;
    fill: none;
    stroke: #333;
    stroke-width: 2;
}

/* menu tabs */
.menu {
    display: flex;
    height: 45px;
    flex: none;
    border-bottom: 1px solid #8b8e94;
    padding-right: 6px;
}
.menu button {
    padding: 9px 12px 0;
    color: #222;
}
.menu .file {
    width: 102px;
    padding-top: 0;
    margin-right: 8px;
    font-size: 21px;
    color: #fff;
    background: linear-gradient(#08d4c6, #03aba6);
    border: 1px solid #0a9c9a;
}
.menu .current {
    border: 1px solid #aaa;
    border-bottom: 0;
    height: 46px;
    background: #fff;
}
.search {
    display: flex;
    align-items: center;
    width: 483px;
    height: 43px;
    margin-left: auto;
    border: 1px solid #888;
    padding: 0 4px 4px 9px;
}
.search input {
    flex: 1;
    font-size: 22px;
    font-style: italic;
    outline: 0;
}
.search input::placeholder {
    color: #666;
}
.search svg {
    width: 26px;
    height: 26px;
}
.menu .collapse {
    padding: 4px 0 0;
    width: 39px;
    color: #777;
}

/* ribbon */
.ribbon {
    display: flex;
    height: 147px;
    flex: none;
    background: linear-gradient(#fff, #f4f6f8 50%, #e3e6eb);
    border-bottom: 2px solid #8f9399;
    color: #444;
}
.group {
    display: flex;
    flex-direction: column;
    border-right: 1px solid #c3c6ca;
}
.group h2 {
    font-size: 18px;
    line-height: 28px;
    text-align: center;
    color: #7a7f86;
}
.tools {
    display: grid;
    flex: 1;
    padding-top: 5px;
}
.g-project {
    width: 83px;
}
.g-clip {
    width: 243px;
}
.g-clip .tools {
    grid-template-columns: 71px 81px 1fr;
    padding-left: 1px;
}
.g-clip .col {
    padding-left: 12px;
}
.g-filter {
    width: 497px;
}
.g-filter .tools {
    grid-template-columns: 78px 162px 118px 1fr;
    padding-left: 3px;
}
.g-filter .col {
    padding-left: 10px;
}
.g-circuit {
    width: 1005px;
}
.g-circuit .tools {
    grid-template-columns: 52px 50px 62px 42px 60px 46px 69px 92px 90px 98px 78px 60px 1fr;
}
.g-circuit .col {
    padding-left: 10px;
}
.g-graph {
    width: 686px;
}
.g-graph .tools {
    grid-template-columns: 106px 182px 142px 132px 1fr;
    padding-left: 13px;
}
.g-font {
    width: 227px;
}
.g-font .tools {
    grid-template-rows: 48px 48px;
    padding: 12px 4px 0;
}
.g-look {
    width: 271px;
}
.g-look .tools {
    grid-template-columns: 97px 1fr;
    padding-left: 12px;
}
.big {
    display: flex;
    flex-direction: column;
    align-items: center;
    justify-content: flex-start;
    align-self: start;
    height: 109px;
    line-height: 27px;
    text-align: center;
    white-space: nowrap;
}
.big svg {
    flex: none;
    width: 30px;
    height: 30px;
    margin: 12px 0 13px;
}
.big.on {
    background: linear-gradient(#fbe08c, #fdd362 40%, #fce07a);
    border: 1px solid #c2a15a;
    border-radius: 3px;
}
.big.on svg {
    margin-top: 11px;
}
.down {
    display: block;
    width: 0;
    margin-top: 9px;
    border: 3px solid transparent;
    border-top: 4px solid #666;
    border-bottom: 0;
}
.down.side {
    display: inline-block;
    margin: 0 0 8px;
}
.col {
    display: grid;
    grid-template-rows: 37px 37px 37px;
    justify-items: start;
}
.col.two {
    grid-template-rows: 48px 48px;
    padding-top: 8px;
}
.small {
    display: flex;
    align-items: center;
    white-space: nowrap;
}
.small svg {
    width: 16px;
    height: 16px;
    margin-right: 1px;
}
.small .down {
    margin: 0 0 4px 13px;
}
.small:disabled {
    color: #a5a7aa;
}
.swatch {
    width: 16px;
    height: 16px;
    margin-right: 2px;
    border: 1px solid #c0c0c0;
    background: #fff;
}
.fontrow {
    display: flex;
    align-items: center;
}
.fontrow select {
    width: 146px;
    height: 37px;
    background: #fcfcfc;
    border: 1px solid #ddd;
}
.fontrow button {
    width: 37px;
    font: 700 20px/26px "Liberation Serif", serif;
    color: #c4c6c8;
}
.fontrow .shrink {
    font-size: 17px;
}

/* workspace */
.workspace {
    display: grid;
    grid-template-columns: 570px 1fr;
    gap: 4px;
    flex: 1;
    min-height: 0;
    padding: 5px 7px 6px 6px;
    background: #a8a8a8;
    border-top: 2px solid #dcdcdc;
}
.panel {
    display: flex;
    flex-direction: column;
    min-height: 0;
    background: #dcdcdc;
    font-size: 19px;
}
.panel header {
    display: flex;
    align-items: center;
    height: 49px;
    padding: 0 8px 0 8px;
    background: linear-gradient(#b2d0e4, #a2c2da);
}
.panel header h2 {
    flex: 1;
    font-size: 23px;
    font-weight: 700;
    color: #000;
}
.panel header button {
    width: 34px;
    height: 30px;
}
.panel header svg {
    width: 16px;
    height: 16px;
}
.pick {
    display: flex;
    gap: 8px;
    padding: 20px 21px 20px 23px;
}
.pick input {
    flex: 1;
    min-width: 0;
    height: 55px;
    padding-left: 12px;
    border: 1px solid #9c9c9c;
    background: #f4f4f4;
}
.pick button {
    width: 145px;
    border: 1px solid #adadad;
    background: #e1e1e1;
}
.tree {
    flex: 1;
    margin: 0 21px 18px 23px;
    padding: 11px 9px 0 12px;
    background: #fff;
    border: 1px solid #8e8e8e;
}
.tree li {
    display: flex;
    align-items: center;
    height: 30px;
    color: #111;
}
.tree .l1 {
    padding-left: 26px;
}
.tree .l2 {
    padding-left: 52px;
}
.tree .l3 {
    padding-left: 78px;
}
.tree .leaf > svg {
    margin-left: 18px;
}
.fold {
    width: 15px;
    height: 15px;
    margin-right: 3px;
    border: 1px solid #8a8a8a;
    background: linear-gradient(#555, #555) center / 9px 1px no-repeat;
}
.tree li > svg {
    width: 16px;
    height: 14px;
    margin-right: 2px;
}
.tree span {
    flex: 1;
    height: 30px;
    padding-left: 2px;
    line-height: 29px;
    border-bottom: 1px solid #dedede;
    white-space: nowrap;
}
.tree em {
    width: 38px;
    height: 30px;
    border-left: 1px solid #e0e0e0;
    border-bottom: 1px solid #dedede;
    padding: 4px 0 0 9px;
    line-height: 0;
    color: #8a8a8a;
}
.tree em svg {
    width: 18px;
    height: 21px;
}
.tree .root span {
    font-weight: 700;
}
.tree .root span, .tree .root em {
    background: #9ab3d0;
    border-color: #9ab3d0;
}
.tree .picked span, .tree .picked em {
    background: #0078d7;
    border-color: #0078d7;
    color: #fff;
}
.tree .picked em {
    color: #c78;
}

/* editor */
.editor {
    display: flex;
    flex-direction: column;
    min-width: 0;
    min-height: 0;
    background: #efefef;
}
.doctabs {
    display: flex;
    height: 51px;
    flex: none;
    background: #a8a8a8;
    border-bottom: 2px solid #dcdcdc;
    font-size: 21px;
    color: #fff;
}
.doctabs button {
    display: flex;
    align-items: center;
    padding: 2px 10px 0 9px;
    white-space: nowrap;
}
.doctabs svg {
    width: 15px;
    height: 15px;
    margin-right: 8px;
}
.doctabs .active {
    background: #dcdcdc;
    color: #111;
}
.sheet {
    display: grid;
    grid-template: minmax(0, 1fr) 31px / minmax(0, 1fr) 30px;
    flex: 1;
    min-height: 0;
    border-top: 2px solid #fff;
}
.vscroll, .hscroll {
    display: grid;
    position: relative;
    background: #efefef;
}
.vscroll {
    grid-template-rows: 573fr 362fr 1297fr;
}
.hscroll {
    grid-template-columns: 1390fr 699fr 1390fr;
    border-bottom: 1px solid #ccc;
}
.vscroll b {
    grid-row: 2;
    background: #cdcdcd;
}
.hscroll b {
    grid-column: 2;
    background: #cdcdcd;
}
.vscroll::before, .vscroll::after, .hscroll::before, .hscroll::after {
    content: "";
    position: absolute;
    width: 8px;
    height: 8px;
    border: solid #555;
    border-width: 2px 0 0 2px;
    transform: rotate(45deg);
}
.vscroll::before {
    top: 16px;
    left: 10px;
}
.vscroll::after {
    bottom: 12px;
    left: 10px;
    transform: rotate(225deg);
}
.hscroll::before {
    left: 14px;
    top: 11px;
    transform: rotate(-45deg);
}
.hscroll::after {
    right: 14px;
    top: 11px;
    transform: rotate(135deg);
}
.modes {
    display: flex;
    height: 40px;
    flex: none;
}
.modes button {
    height: 37px;
    padding: 1px 6px 0;
    font-size: 21px;
    color: #111;
    background: #fff;
    border: 1px solid #ccc;
    border-top: 0;
}
.modes .active {
    font-weight: 700;
    background: #dcdcdc;
}

/* schematic */
.schematic {
    width: 100%;
    height: 100%;
    background: #fffcf7;
    font-family: "Roboto Mono", "DejaVu Sans Mono", monospace;
}
.schematic path, .schematic circle {
    stroke-linecap: round;
    stroke-linejoin: round;
}
.major, .minor {
    fill: none;
    stroke: #f3f0e9;
    stroke-width: 1;
}
.minor {
    stroke-dasharray: 3 3;
}
.wire {
    fill: none;
    stroke: #000080;
    stroke-width: 8;
}
.dot {
    fill: #000080;
}
.schematic .lead {
    fill: none;
    stroke: #000;
    stroke-width: 8;
    stroke-linecap: butt;
}
.part {
    fill: none;
    stroke: #0000ff;
    stroke-width: 8;
}
.part.zig {
    stroke-width: 7;
}
.power {
    fill: none;
    stroke: #800000;
    stroke-width: 8;
}
.ring {
    fill: #fffcf7;
    stroke: #000;
    stroke-width: 7;
}
.box {
    fill: #fff;
    stroke: #000;
    stroke-width: 8;
}
.arrow {
    fill: #fff;
    stroke: #000;
    stroke-width: 1;
}
.port {
    fill: #ffff80;
    stroke: #800000;
    stroke-width: 1;
}
.chip {
    fill: #404040;
}
.mark {
    fill: none;
    stroke: #c0c0c0;
    stroke-width: 6;
}
.num {
    font-size: 46px;
    text-anchor: middle;
}
.pinname {
    font-size: 61px;
    fill: #c0c0c0;
    text-anchor: end;
}
.pinname .start {
    text-anchor: start;
}
.net {
    font-size: 61px;
    fill: #800000;
}
.ref {
    font-size: 42px;
    fill: #000080;
}
.ref .chipref {
    font-size: 61px;
}

/* status bar */
.status {
    display: grid;
    grid-template-columns: 1035fr 1037fr 2024fr;
    height: 51px;
    flex: none;
    padding: 4px 0;
    background: #efefef;
    border-bottom: 1px solid #ccc;
    font-size: 19px;
}
.status p {
    padding-left: 11px;
    line-height: 44px;
    border-right: 1px solid #aaa;
}
.status p:last-child {
    border: 0;
}
.status span {
    margin-right: 22px;
}

/* taskbar */
.taskbar {
    display: flex;
    height: 73px;
    flex: none;
    background: #060b12;
    color: #fff;
}
.taskbar > button {
    width: 90px;
}
.taskbar svg {
    width: 40px;
    height: 40px;
    vertical-align: middle;
}
.taskbar .start {
    width: 87px;
}
.taskbar .start svg {
    width: 29px;
    height: 29px;
}
.cortana {
    display: flex;
    align-items: center;
    width: 624px;
    padding: 0 17px;
    background: #f2f2f2;
    color: #222;
}
.cortana input {
    flex: 1;
    margin-left: 16px;
    font-size: 23px;
    outline: 0;
}
.cortana input::placeholder {
    color: #333;
}
.taskbar .open {
    background: linear-gradient(#76b9ed, #76b9ed) bottom / 74px 4px no-repeat;
}
.taskbar .now {
    background: linear-gradient(#76b9ed, #76b9ed) bottom / 100% 4px no-repeat #3a3d42;
}
.tray {
    display: flex;
    align-items: center;
    gap: 32px;
    margin-left: auto;
    padding-right: 34px;
    margin-right: 8px;
    border-right: 1px solid #666;
    line-height: 34px;
}
.tray svg {
    width: 30px;
    height: 30px;
    fill: none;
    stroke: #fff;
    stroke-width: 2;
}
.tray time {
    width: 100px;
    margin-right: 4px;
    font-size: 21px;
    text-align: center;
}
.notes {
    position: relative;
}
.notes span {
    position: absolute;
    left: 12px;
    top: 14px;
    width: 32px;
    height: 32px;
    border: 2px solid #999;
    border-radius: 50%;
    background: #333;
    font-size: 21px;
    line-height: 28px;
}
```
